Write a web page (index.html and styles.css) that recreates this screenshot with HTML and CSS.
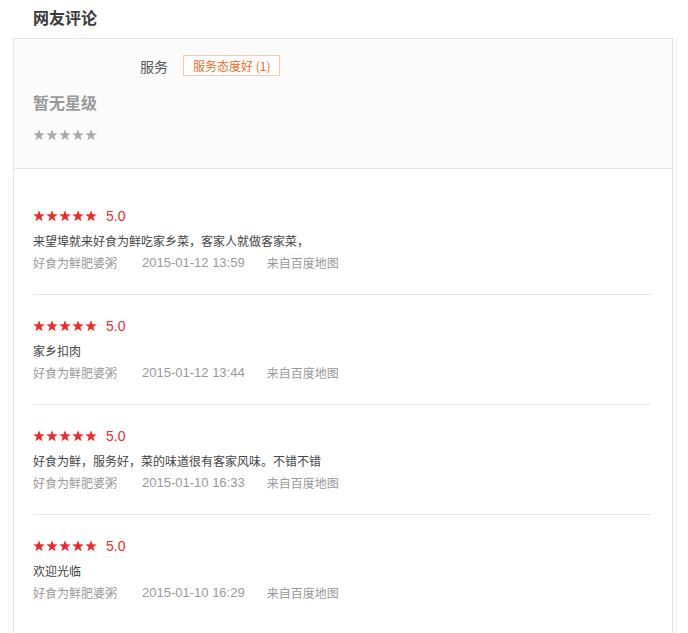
FILE: index.html
```html
<!DOCTYPE html>
<html lang="zh-CN">
<head>
    <meta charset="UTF-8">
    <meta name="viewport" content="width=device-width, initial-scale=1.0">
    <title>网友评论</title>
    <link rel="stylesheet" href="styles.css">
</head>
<body>
    <svg width="0" height="0" class="defs">
        <symbol id="star" viewBox="0 0 12 12">
            <polygon points="6,0.3 7.45,4.3 11.7,4.4 8.35,7 9.55,11.2 6,8.75 2.45,11.2 3.65,7 0.3,4.4 4.55,4.3"/>
        </symbol>
    </svg>

    <h2 class="title">网友评论</h2>

    <div class="box">
        <div class="summary">
            <div class="tags">
                <span class="tag-label">服务</span>
                <span class="tag">服务态度好 (1)</span>
            </div>
            <div class="no-rank">暂无星级</div>
            <div class="stars gray">
                <svg><use href="#star"/></svg><svg><use href="#star"/></svg><svg><use href="#star"/></svg><svg><use href="#star"/></svg><svg><use href="#star"/></svg>
            </div>
        </div>

        <ul class="reviews">
            <li class="review">
                <div class="score">
                    <span class="stars red"><svg><use href="#star"/></svg><svg><use href="#star"/></svg><svg><use href="#star"/></svg><svg><use href="#star"/></svg><svg><use href="#star"/></svg></span>
                    <span class="num">5.0</span>
                </div>
                <p class="text">来望埠就来好食为鲜吃家乡菜，客家人就做客家菜，</p>
                <div class="meta"><span class="user">好食为鲜肥婆粥</span><span class="date">2015-01-12 13:59</span><span class="from">来自百度地图</span></div>
            </li>
            <li class="review">
                <div class="score">
                    <span class="stars red"><svg><use href="#star"/></svg><svg><use href="#star"/></svg><svg><use href="#star"/></svg><svg><use href="#star"/></svg><svg><use href="#star"/></svg></span>
                    <span class="num">5.0</span>
                </div>
                <p class="text">家乡扣肉</p>
                <div class="meta"><span class="user">好食为鲜肥婆粥</span><span class="date">2015-01-12 13:44</span><span class="from">来自百度地图</span></div>
            </li>
            <li class="review">
                <div class="score">
                    <span class="stars red"><svg><use href="#star"/></svg><svg><use href="#star"/></svg><svg><use href="#star"/></svg><svg><use href="#star"/></svg><svg><use href="#star"/></svg></span>
                    <span class="num">5.0</span>
                </div>
                <p class="text">好食为鲜，服务好，菜的味道很有客家风味。不错不错</p>
                <div class="meta"><span class="user">好食为鲜肥婆粥</span><span class="date">2015-01-10 16:33</span><span class="from">来自百度地图</span></div>
            </li>
            <li class="review">
                <div class="score">
                    <span class="stars red"><svg><use href="#star"/></svg><svg><use href="#star"/></svg><svg><use href="#star"/></svg><svg><use href="#star"/></svg><svg><use href="#star"/></svg></span>
                    <span class="num">5.0</span>
                </div>
                <p class="text">欢迎光临</p>
                <div class="meta"><span class="user">好食为鲜肥婆粥</span><span class="date">2015-01-10 16:29</span><span class="from">来自百度地图</span></div>
            </li>
        </ul>
    </div>
</body>
</html>
```

FILE: styles.css
```css
/* base */
body {
    margin: 0;
    background: #fff;
    font-family: "Noto Sans CJK SC", "Liberation Sans", sans-serif;
    color: #333;
    font-size: 12px;
}

.defs {
    position: absolute;
    width: 0;
    height: 0;
}

.title {
    margin: 0;
    padding-left: 33px;
    height: 38px;
    line-height: 35px;
    font-size: 16px;
    font-weight: bold;
    color: #3a3a3a;
}

.box {
    margin-left: 13px;
    width: 660px;
    box-sizing: border-box;
    border: 1px solid #e4e4e4;
    border-bottom: none;
    box-shadow: 3px 0 0 #fff, 4px 0 0 #f0f0f0;
    min-height: 600px;
}

/* summary block */
.summary {
    background: #fbfbfb;
    border-bottom: 1px solid #e4e4e4;
    height: 130px;
    box-sizing: border-box;
    padding: 16px 0 0 19px;
}

.tags {
    display: flex;
    align-items: center;
    padding-left: 107px;
    height: 21px;
}

.tag-label {
    font-size: 14px;
    color: #555;
}

.tag {
    margin-left: 15px;
    height: 21px;
    box-sizing: border-box;
    padding: 0 9px;
    line-height: 19px;
    border: 1px solid #f6c9a9;
    background: #fff;
    color: #f06a1f;
    font-size: 12px;
}

.no-rank {
    margin-top: 16px;
    line-height: 20px;
    font-size: 16px;
    font-weight: bold;
    color: #999;
}

.stars {
    display: flex;
    gap: 1px;
    height: 12px;
}

.stars svg {
    width: 12px;
    height: 12px;
}

.stars.gray {
    margin-top: 17px;
    fill: #aaa;
}

.stars.red {
    fill: #ee2a2a;
}

/* reviews */
.reviews {
    list-style: none;
    margin: 0;
    padding: 16px 21px 0 19px;
}

.review {
    padding: 21px 0 21px;
    border-bottom: 1px solid #e6e6e6;
}

.review:last-child {
    border-bottom: none;
}

.score {
    display: flex;
    align-items: center;
    height: 20px;
}

.num {
    margin-left: 9px;
    font-size: 14px;
    color: #ee2a2a;
    font-family: "Liberation Sans", sans-serif;
}

.text {
    margin: 5px 0 0;
    line-height: 20px;
    color: #444;
}

.meta {
    margin-top: 2px;
    line-height: 20px;
    color: #999;
    display: flex;
}

.meta .date {
    margin-left: 25px;
    font-family: "Liberation Sans", sans-serif;
    font-size: 13px;
}

.meta .from {
    margin-left: 22px;
}
```
